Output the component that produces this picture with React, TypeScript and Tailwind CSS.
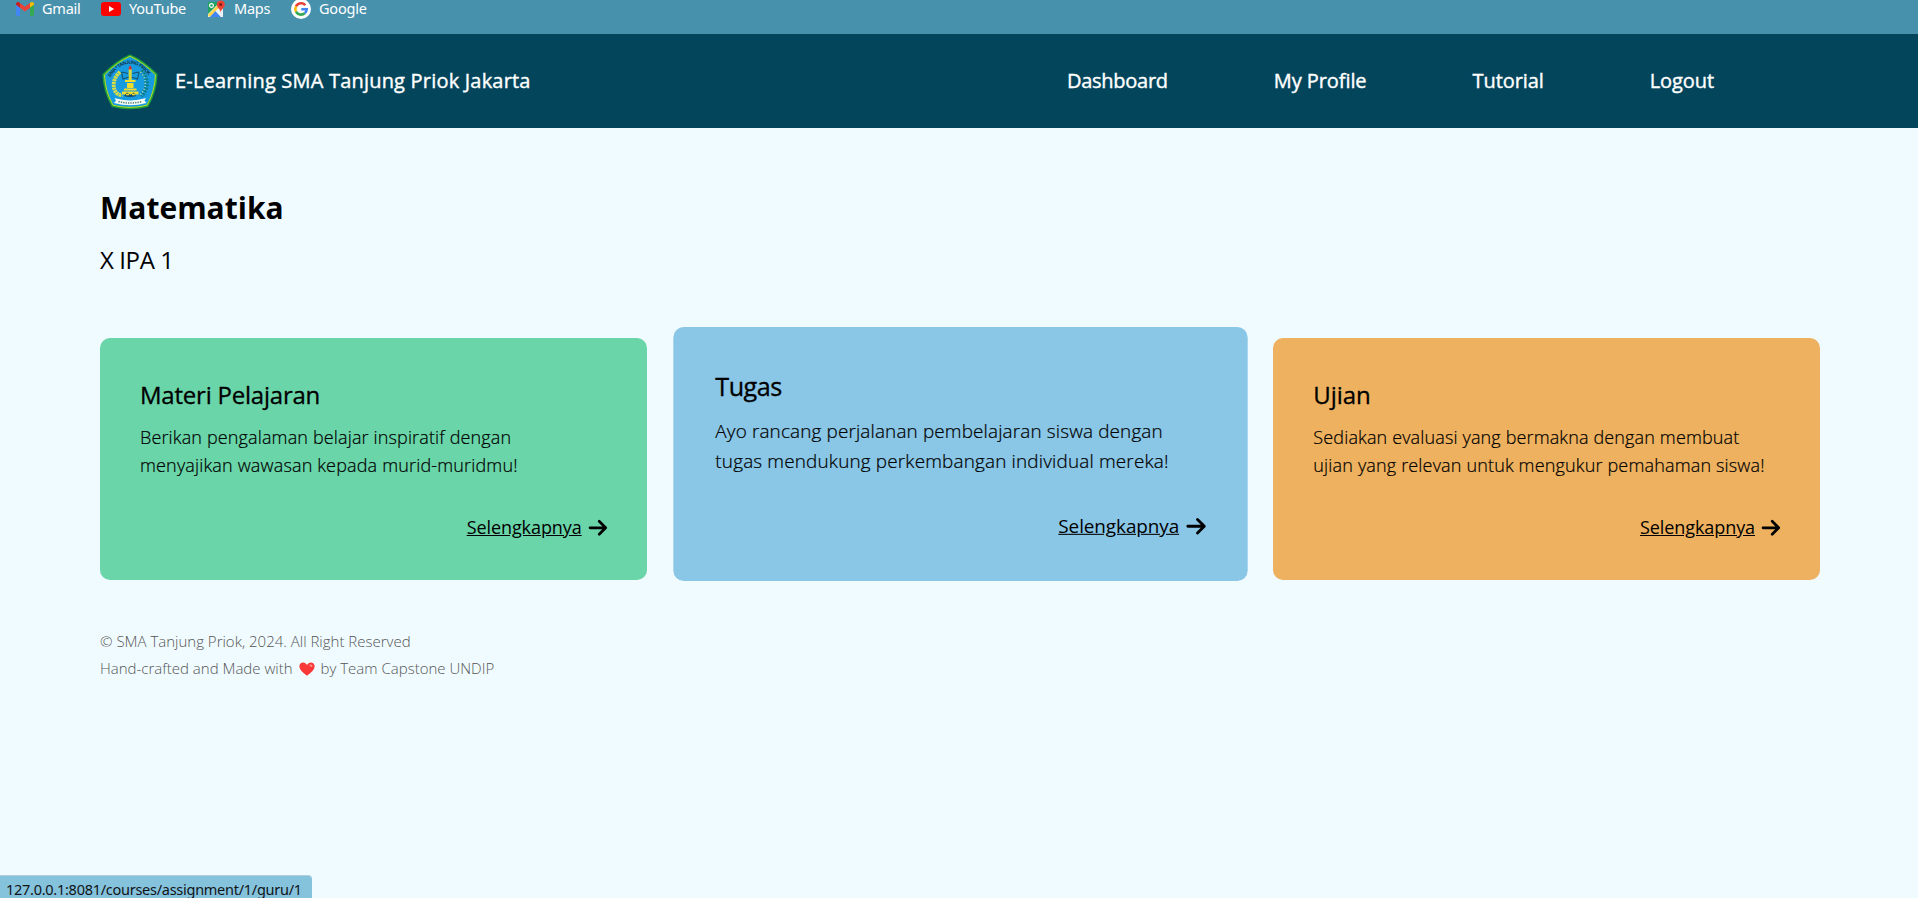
import React from "react";

function Arrow() {
  return (
    <svg width="20" height="20" viewBox="0 0 20 20" fill="none" stroke="#000" strokeWidth="2.7" strokeLinecap="round" strokeLinejoin="round">
      <path d="M2 10.800H17.300M11.200 4.300L17.700 10.800L11.200 17.300" />
    </svg>
  );
}

function GmailIcon() {
  return (
    <svg width="18" height="14" viewBox="0 0 18 14">
      <path d="M0 2.2V12.6C0 13.4.6 14 1.4 14H4V5.2Z" fill="#4285f4" />
      <path d="M18 2.2V12.6C18 13.4 17.4 14 16.600 14H14V5.200Z" fill="#34a853" />
      <path d="M14 1V5.600L18 2.800V2C18 .1 15.800-.600 14.500.500Z" fill="#fbbc04" />
      <path d="M4 5.800V.9L9 4.700L14 .9V5.800L9 9.600Z" fill="#ea4335" />
      <path d="M0 2.800L4 5.800V.9L3.400.400C2-.600 0 .200 0 2Z" fill="#c5221f" />
    </svg>
  );
}

function YouTubeIcon() {
  return (
    <svg width="20" height="14" viewBox="0 0 20 14">
      <rect width="20" height="14" rx="3" fill="#f00" />
      <path d="M8 4L13.200 7L8 10Z" fill="#fff" />
    </svg>
  );
}

function MapsIcon() {
  return (
    <svg width="19" height="18" viewBox="0 0 19 18">
      <path d="M1 2H16V17H1Z" fill="#e8eaed" />
      <path d="M1 2H13L1 14Z" fill="#1ea362" />
      <path d="M0.800 15L13 2.500L15 5L3 17Z" fill="#ffd54b" />
      <path d="M3 17L8.500 11L14 17Z" fill="#4285f4" />
      <path d="M8.500 11L12 8L16 12V17H14Z" fill="#eef2f6" />
      <circle cx="4.500" cy="5.500" r="1.900" fill="none" stroke="#fff" strokeWidth="1.200" />
      <path d="M13.700 12.500C13.500 9 9.800 8 9.800 4.500C9.800 2 11.500.500 13.700.500S17.800 2 17.800 4.500C17.800 8 14 9 13.700 12.500Z" fill="#ea4335" />
      <circle cx="13.700" cy="4.500" r="1.500" fill="#7b1f17" />
    </svg>
  );
}

function GoogleIcon() {
  return (
    <svg width="20" height="20" viewBox="0 0 20 20" fill="none" strokeWidth="2.600">
      <circle cx="10" cy="10" r="10" fill="#fff" />
      <path d="M14.300 6.200A5.700 5.700 0 0 0 5 7.300" stroke="#ea4335" />
      <path d="M5 7.300A5.700 5.700 0 0 0 5 12.700" stroke="#fbbc05" />
      <path d="M5 12.700A5.700 5.700 0 0 0 13.800 14.200" stroke="#34a853" />
      <path d="M13.800 14.200A5.700 5.700 0 0 0 15.700 10.300H10.300" stroke="#4285f4" />
    </svg>
  );
}

function SchoolLogo() {
  return (
    <svg width="56" height="56" viewBox="0 0 56 56" className="mt-[2px]">
      <path d="M28 1.500Q41 7 54.500 20.500Q54 37 45.500 52Q28 56.500 10.500 52Q2 37 1.500 20.500Q15 7 28 1.500Z" fill="#169be0" stroke="#1f9c3c" strokeWidth="2.200" strokeLinejoin="round" />
      <path d="M28 2.300Q41 8 53.500 20.800Q53 37 45 51.200Q28 55.500 11 51.200Q3 37 2.500 20.800Q15 8 28 2.300Z" fill="none" stroke="#b9e21f" strokeWidth="1" />
      <defs>
        <path id="crest-arc" d="M8 23.500Q28-4 48 23.500" />
      </defs>
      <text className="font-['Liberation_Sans']" fontSize="5" fontWeight="bold" fill="#12394d" textLength="48">
        <textPath href="#crest-arc">SMA * TANJUNG PRIOK</textPath>
      </text>
      <path d="M18 18C11 24 9.500 34 15 39.500C17 41 19 41.500 20 41" fill="none" stroke="#d9de45" strokeWidth="3.800" strokeDasharray="2.300 .6" />
      <path d="M39 17C46 24 47 34 39 42" fill="none" stroke="#0e7c80" strokeWidth="4.500" strokeDasharray="1.800 1.200" />
      <path d="M38.500 18C44.500 24 45.500 34 38 41" fill="none" stroke="#b9e8d4" strokeWidth="1.300" strokeDasharray="1.200 1.800" />
      <path d="M20 18L26 19.500M36.500 18L30.500 19.500M19.500 18L21 25L27 23M37 18L35.500 25L29 23" fill="none" stroke="#15546f" strokeWidth="1.100" />
      <rect x="26.700" y="15" width="3" height="13" fill="#ddd83a" />
      <path d="M26.500 15.500Q27 12 28.200 11.500Q29.500 12 29.800 15.500Z" fill="#e32b2b" />
      <path d="M23 26H33.500V28H23ZM25 29H31.500V34H25ZM22 34.500H34.500V36.500H22ZM20 37.500H36.500V40.500H20Z" fill="#f0dc2c" />
      <path d="M22 42Q28 44 34 42L32 38.500L28.500 41L25 38.500Z" fill="#174963" />
      <path d="M24 40.500H27M30 40.500H33" stroke="#f0dc2c" strokeWidth="1.300" />
      <path d="M12.500 44L15.500 44.800Q28 48 41 44.800L44 44L42.500 46.500L44.500 49Q28 53.500 12 49L14 46.500Z" fill="#f4fbf5" />
      <path d="M16.500 47.500Q28 50.500 40 47.500" fill="none" stroke="#4f7d78" strokeWidth="1.500" strokeDasharray="1.300 1.100" />
    </svg>
  );
}

function Heart() {
  return (
    <svg width="16" height="14" viewBox="0 0 16 14" className="mx-[6px] inline-block align-[-2px]">
      <path d="M8 13.800C4 10.800.4 7.800.4 4.300C.4 2 2 .5 4.100.5C5.800.5 7.200 1.400 8 2.900C8.800 1.400 10.200.5 11.900.5C14 .5 15.600 2 15.600 4.300C15.600 7.800 12 10.800 8 13.800Z" fill="#fa3838" />
      <ellipse cx="12" cy="3.600" rx="1.600" ry="1.100" transform="rotate(30 12 3.600)" fill="#ff8b87" />
    </svg>
  );
}

const bookmarks = [
  { label: "Gmail", icon: <GmailIcon />, cls: "w-[85px] gap-[8px]" },
  { label: "YouTube", icon: <YouTubeIcon />, cls: "w-[106px] gap-[8px]" },
  { label: "Maps", icon: <MapsIcon />, cls: "w-[84px] gap-[8px]" },
  { label: "Google", icon: <GoogleIcon />, cls: "gap-[8px]" },
];

const cards = [
  {
    title: "Materi Pelajaran",
    titleCls: "tracking-[-0.22px]",
    lines: ["Berikan pengalaman belajar inspiratif dengan", "menyajikan wawasan kepada murid-muridmu!"],
    cls: "bg-[#6ad5a9]",
  },
  {
    title: "Tugas",
    titleCls: "tracking-[-0.5px]",
    lines: ["Ayo rancang perjalanan pembelajaran siswa dengan", "tugas mendukung perkembangan individual mereka!"],
    cls: "bg-[#8ac6e6] -translate-y-[5px] scale-105",
  },
  {
    title: "Ujian",
    titleCls: "tracking-[-0.1px]",
    lines: ["Sediakan evaluasi yang bermakna dengan membuat", "ujian yang relevan untuk mengukur pemahaman siswa!"],
    cls: "bg-[#edb15f]",
  },
];

export default function App() {
  return (
    <div className="relative flex h-[898px] w-full flex-col overflow-hidden bg-[#f0fbff] font-['Open_Sans',sans-serif] text-black">
      <div className="flex h-[34px] shrink-0 items-start bg-[#4791ac] pl-4 font-['Noto_Sans',sans-serif] text-[14.5px] leading-[17px] tracking-[-0.22px] text-white">
        {bookmarks.map((b) => (
          <div key={b.label} className={`flex h-[17px] shrink-0 items-center ${b.cls}`}>
            <span className="flex shrink-0">{b.icon}</span>
            <span>{b.label}</span>
          </div>
        ))}
      </div>

      <header className="flex h-[94px] shrink-0 items-center justify-between bg-[#03465c] pl-[102px] pr-[204px] text-white">
        <div className="flex items-center gap-[17px]">
          <SchoolLogo />
          <span className="text-[20px] font-medium tracking-[0.2px] [-webkit-text-stroke:0.4px]">E-Learning SMA Tanjung Priok Jakarta</span>
        </div>
        <nav className="flex gap-[106px] text-[20px] font-medium tracking-[-0.08px] [-webkit-text-stroke:0.4px]">
          <a className="tracking-[-0.26px]">Dashboard</a>
          <a>My Profile</a>
          <a>Tutorial</a>
          <a>Logout</a>
        </nav>
      </header>

      <main className="px-[100px] pt-[60px]">
        <h1 className="text-[30px] leading-10 font-bold">Matematika</h1>
        <p className="mt-4 text-[24px] leading-8 tracking-[-0.4px]">X IPA 1</p>

        <div className="mt-[62px] grid w-[1720px] grid-cols-3 gap-10">
          {cards.map((c) => (
            <section key={c.title} className={`flex h-[242px] flex-col rounded-[10px] px-10 pt-[39px] ${c.cls}`}>
              <h2 className={`text-[24px] leading-9 font-medium [-webkit-text-stroke:0.3px] ${c.titleCls}`}>{c.title}</h2>
              <p className="mt-[10px] text-[18px] leading-7 font-light tracking-[0.14px] whitespace-nowrap [-webkit-text-stroke:0.2px]">
                {c.lines[0]}
                <br />
                <span className="tracking-[0.16px]">{c.lines[1]}</span>
              </p>
              <a className="-mr-px mt-[34px] flex items-center justify-end gap-[6px] text-[18px] leading-7">
                <span className="tracking-[-0.08px] underline">Selengkapnya</span>
                <Arrow />
              </a>
            </section>
          ))}
        </div>

        <footer className="mt-[48px] text-[15px] leading-[27px] font-light text-[#555]">
          <p>© SMA Tanjung Priok, 2024. All Right Reserved</p>
          <p>
            Hand-crafted and Made with
            <Heart />
            by Team Capstone UNDIP
          </p>
        </footer>
      </main>

      <div className="absolute bottom-0 left-0 flex h-[23px] w-[312px] items-center rounded-tr-[4px] border-t border-[#b5cdd6] bg-[#85c2dc] pt-[4px] pl-[6px] font-['Noto_Sans',sans-serif] text-[14.5px] leading-[18px] tracking-[-0.27px] whitespace-nowrap text-[#101418]">
        127.0.0.1:8081/courses/assignment/1/guru/1
      </div>
    </div>
  );
}
